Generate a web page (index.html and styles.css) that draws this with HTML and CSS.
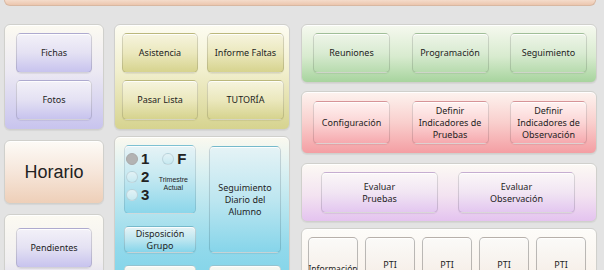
FILE: index.html
```html
<!DOCTYPE html>
<html lang="es">
<head>
<meta charset="utf-8">
<title>Panel</title>
<link rel="stylesheet" href="styles.css">
</head>
<body>
<div class="topbar"></div>
<div class="board">
  <div class="col col-left">
    <div class="panel p-lav stack">
      <div class="btn b-lav">Fichas</div>
      <div class="btn b-lav">Fotos</div>
    </div>
    <div class="panel p-peach horario">Horario</div>
    <div class="panel p-cream pend">
      <div class="btn b-lav">Pendientes</div>
    </div>
  </div>
  <div class="col col-mid">
    <div class="panel p-yel grid2">
      <div class="btn b-yel">Asistencia</div>
      <div class="btn b-yel">Informe Faltas</div>
      <div class="btn b-yel">Pasar Lista</div>
      <div class="btn b-yel">TUTORÍA</div>
    </div>
    <div class="panel p-cyan cyangrid">
      <div class="trim">
        <div class="radios">
          <div class="rrow"><span class="radio on"></span><span class="num">1</span></div>
          <div class="rrow"><span class="radio"></span><span class="num">2</span></div>
          <div class="rrow"><span class="radio"></span><span class="num">3</span></div>
        </div>
        <div class="trim-right">
          <div class="rrow"><span class="radio"></span><span class="num">F</span></div>
          <div class="trim-label">Trimestre<br>Actual</div>
        </div>
      </div>
      <div class="btn b-cyan seg">Seguimiento<br>Diario del<br>Alumno</div>
      <div class="btn b-cyan">Disposición<br>Grupo</div>
      <div class="btn b-cyan2"></div>
      <div class="btn b-cyan2"></div>
    </div>
  </div>
  <div class="col col-right">
    <div class="panel p-green row3 green">
      <div class="btn b-green">Reuniones</div>
      <div class="btn b-green">Programación</div>
      <div class="btn b-green">Seguimiento</div>
    </div>
    <div class="panel p-red row3 red">
      <div class="btn b-red">Configuración</div>
      <div class="btn b-red">Definir<br>Indicadores de<br>Pruebas</div>
      <div class="btn b-red">Definir<br>Indicadores de<br>Observación</div>
    </div>
    <div class="panel p-pink row2 pink">
      <div class="btn b-pink">Evaluar<br>Pruebas</div>
      <div class="btn b-pink">Evaluar<br>Observación</div>
    </div>
    <div class="panel p-warm row5">
      <div class="btn b-warm info">Información</div>
      <div class="btn b-warm">PTI</div>
      <div class="btn b-warm">PTI</div>
      <div class="btn b-warm">PTI</div>
      <div class="btn b-warm">PTI</div>
    </div>
  </div>
</div>
</body>
</html>
```

FILE: styles.css
```css
html, body {
  margin: 0;
  height: 100%;
  overflow: hidden;
}
body {
  background: #e3e3e3;
  font-family: "Noto Sans", sans-serif;
  font-size: 9px;
  color: #1e1e1e;
}
.topbar {
  height: 6px;
  margin: 0 8px 18px 4px;
  background: linear-gradient(#f4dccb, #ecc6ae);
  border: 1px solid #d8b8a2;
  border-top: none;
  border-radius: 0 0 6px 6px;
  box-sizing: border-box;
}
.board {
  display: flex;
  align-items: flex-start;
  gap: 10px;
  padding-left: 4px;
}
.col { display: flex; flex-direction: column; }
.col-left { width: 100px; gap: 10px; }
.col-mid { width: 176px; gap: 6px; margin-right: 1px; }
.col-right { width: 296px; }

.panel {
  border: 1px solid #d0d0cc;
  border-radius: 6px;
  box-sizing: border-box;
  box-shadow: 0 1px 1px rgba(0,0,0,.06), inset 0 1px 0 rgba(255,255,255,.9);
}
.btn {
  display: flex;
  align-items: center;
  justify-content: center;
  text-align: center;
  border: 1px solid rgba(0,0,0,.13);
  border-radius: 5px;
  box-sizing: border-box;
  line-height: 12px;
  box-shadow: inset 0 1px 0 rgba(255,255,255,.85), 0 1px 1px rgba(0,0,0,.07);
}

/* panel colours */
.p-lav { background: linear-gradient(#fcfaf1, #ece9f3 45%, #c8c4ee); }
.p-yel { background: linear-gradient(#fdfcf1, #f1efcd 45%, #d6d38f); }
.p-peach { background: linear-gradient(#fdfbf7, #f6e6da 50%, #eecfb8); }
.p-cream { background: linear-gradient(#fcfaf2, #f0eef0 60%, #d8d4ee); }
.p-cyan { background: linear-gradient(#fbf9ef, #d9f0f2 22%, #92d9eb 70%, #7ad2e8); }
.p-green { background: linear-gradient(#f6f9ef, #d8ebcf 55%, #a7d49e); }
.p-red { background: linear-gradient(#fdf3ef, #f9cfcd 50%, #f49ea3); }
.p-pink { background: linear-gradient(#fcf9f4, #f3e3f1 55%, #e4c3ef); }
.p-warm { background: linear-gradient(#fdfcf9, #f6ebe2); }

/* button colours */
.b-lav { background: linear-gradient(#f3f1f8, #e4e1f3 50%, #c7c3ee); }
.b-yel { background: linear-gradient(#f6f4de, #ebe8bd 50%, #d6d38e); }
.b-green { background: linear-gradient(#eef5e8, #d9ebd2 50%, #b7dbae); }
.b-red { background: linear-gradient(#fff2f1, #fbd5d5 50%, #f6a9ae); }
.b-pink { background: linear-gradient(#fbf7f8, #f1e5f3 50%, #e3c7f0); }
.b-cyan { background: linear-gradient(#e5f3f6, #bde6f0 50%, #86d5ea); }
.b-cyan2 { background: linear-gradient(#f9f8f0, #e8f3f2 40%, #a9e0ee); }
.b-warm { background: linear-gradient(#fbfaf8, #f4ebe3); }

/* left column */
.stack {
  height: 106px;
  padding: 8px 11px 0;
  display: flex;
  flex-direction: column;
  gap: 7px;
}
.stack .btn { height: 40px; }
.horario {
  height: 64px;
  display: flex;
  align-items: center;
  justify-content: center;
  font-family: "Liberation Sans", Arial, sans-serif;
  font-size: 18px;
  color: #222;
}
.pend {
  height: 80px;
  padding: 13px 11px 0;
}
.pend .btn { height: 40px; }

/* middle column */
.grid2 {
  height: 106px;
  padding: 8px 6px 0 7px;
  display: grid;
  grid-template-columns: 76px 77px;
  grid-auto-rows: 40px;
  column-gap: 9px;
  row-gap: 7px;
}
.cyangrid {
  height: 160px;
  padding: 8px 8px 0 9px;
  display: grid;
  grid-template-columns: 72px 72px;
  grid-template-rows: 69px 27px 30px;
  column-gap: 13px;
  row-gap: 12px;
}
.seg { grid-column: 2; grid-row: 1 / 3; margin-top: 1px; }
.trim {
  border: 1px solid rgba(0,0,0,.1);
  border-radius: 5px;
  background: linear-gradient(#e6f3f6, #c6e9f1 45%, #8bd6ea);
  box-shadow: inset 0 1px 0 rgba(255,255,255,.8);
  display: flex;
  padding: 4px 0 0 1px;
}
.radios { display: flex; flex-direction: column; }
.rrow {
  display: flex;
  align-items: center;
  height: 18px;
  gap: 3px;
}
.radio {
  width: 12px;
  height: 12px;
  border-radius: 50%;
  box-sizing: border-box;
  border: 1px solid rgba(120,140,150,.25);
  background: linear-gradient(#e3f2f6, #c6e9f1);
}
.radio.on {
  background: #b3b3b3;
  border-color: #a9a9a9;
}
.num {
  font-family: "Liberation Sans", sans-serif;
  font-weight: bold;
  font-size: 15px;
  line-height: 18px;
  color: #222;
}
.trim-right {
  margin-left: 13px;
  display: flex;
  flex-direction: column;
}
.trim-label {
  margin-top: 8px;
  font-family: "Liberation Sans", Arial, sans-serif;
  font-size: 7px;
  line-height: 8px;
  text-align: center;
  width: 30px;
  margin-left: -4px;
}

/* right column */
.row3 {
  display: flex;
  justify-content: space-between;
  align-items: flex-start;
  padding: 8px 9px 0 11px;
}
.row3 .btn { width: 77px; height: 40px; }
.green { height: 59px; margin-bottom: 8px; }
.red { height: 63px; margin-bottom: 9px; }
.red .btn { height: 43px; margin-top: 1px; }
.pink { height: 59px; margin-bottom: 6px; }
.row2 {
  display: flex;
  justify-content: space-between;
  align-items: flex-start;
  padding: 8px 21px 0 19px;
}
.row2 .btn { width: 117px; height: 41px; }
.row5 {
  height: 80px;
  display: flex;
  gap: 7px;
  padding: 8px 0 0 6px;
}
.row5 .btn {
  width: 50px;
  height: 50px;
  border-color: rgba(0,0,0,.25);
  align-items: flex-start;
  padding-top: 21px;
}
.row5 .info { padding-top: 25px; font-size: 8.5px; }
```
